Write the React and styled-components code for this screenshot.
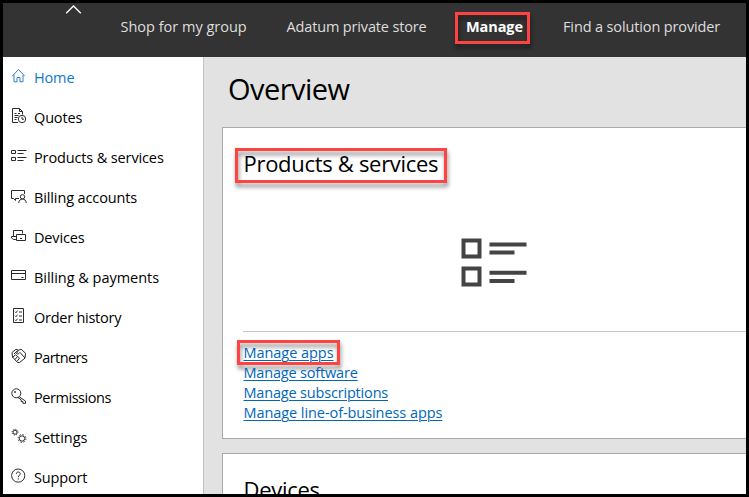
import React from "react";
import styled, { createGlobalStyle } from "styled-components";

const Global = createGlobalStyle`
  * { box-sizing: border-box; }
  body { margin: 0; background: #000; overflow: hidden; }
`;

const Frame = styled.div`
  width: 749px;
  height: 497px;
  border: 3px solid #000;
  overflow: hidden;
  display: flex;
  flex-direction: column;
  font: 400 14.5px/20px "Open Sans", "Noto Sans", sans-serif;
  color: #000;
`;

const TopBar = styled.header`
  position: relative;
  flex: none;
  height: 54px;
  background: #333;
  display: flex;
  align-items: flex-start;
  padding: 14px 0 0 117.5px;
  white-space: nowrap;
`;

const Collapse = styled.svg`
  position: absolute;
  left: 62px;
  top: 1px;
  width: 17px;
  height: 11px;
`;

const NavItem = styled.a`
  position: relative;
  flex: none;
  width: ${(p) => p.$width}px;
  color: ${(p) => (p.$active ? "#fff" : "#dedede")};
  font-weight: ${(p) => (p.$active ? 700 : 400)};
  letter-spacing: ${(p) => p.$track || 0}px;
`;

const Highlight = styled.span`
  position: absolute;
  left: ${(p) => p.$left}px;
  top: ${(p) => p.$top}px;
  width: ${(p) => p.$width}px;
  height: ${(p) => p.$height}px;
  border: 3px solid #ff4343;
  filter: drop-shadow(1px 4px 2px rgba(0, 0, 0, 0.45));
  pointer-events: none;
`;

const Body = styled.div`
  flex: 1;
  min-height: 0;
  display: flex;
`;

const Sidebar = styled.nav`
  flex: none;
  width: 201px;
  background: #fff;
  border-right: 1px solid #c2c2c2;
`;

const SideItem = styled.a`
  display: flex;
  align-items: center;
  height: 40px;
  padding: 2px 0 0 8px;
  gap: 7px;
  white-space: nowrap;
  color: ${(p) => (p.$active ? "#0f77d0" : "#000")};
  letter-spacing: ${(p) => p.$track || 0}px;
`;

const Icon = styled.svg`
  flex: none;
  width: 16px;
  height: 16px;
  margin-top: -4px;
  fill: none;
  stroke: ${(p) => (p.$active ? "#2f7fd0" : "#2b2b2b")};
  stroke-width: 1;
`;

const Main = styled.main`
  flex: 1;
  min-width: 0;
  background: #e2e2e2;
  padding-left: 18px;
  overflow: hidden;
`;

const PageTitle = styled.h1`
  margin: 0;
  height: 70px;
  padding: 12px 0 0 6px;
  font-size: 29px;
  line-height: 40px;
  font-weight: 400;
  letter-spacing: -0.55px;
`;

const Card = styled.section`
  height: 312px;
  margin-bottom: 14px;
  border: 1px solid #a9a9a9;
  border-right: 0;
  background: #fff;
  padding: 20px 0 0 20px;
`;

const CardTitle = styled.h2`
  position: relative;
  margin: 0;
  padding-left: 0.5px;
  font-size: 22px;
  line-height: 30px;
  font-weight: 400;
  letter-spacing: -0.3px;
`;

const Art = styled.div`
  display: flex;
  justify-content: center;
  height: 154px;
  padding: 60px 1px 0 0;
  border-bottom: 1px solid #c8c8c8;
`;

const Links = styled.div`
  display: flex;
  flex-direction: column;
  align-items: flex-start;
  padding: 11px 0 0 0.5px;
`;

const Link = styled.a`
  position: relative;
  color: #0067b8;
  text-decoration: underline;
  text-decoration-thickness: 1px;
  text-underline-offset: 2px;
  letter-spacing: ${(p) => p.$track || 0}px;
`;

const icons = {
  home: <path d="M1.200 8.200 7.500 1.500l6.300 6.700M3 6.800v7h3v-4.300h3v4.300h3v-7" />,
  quotes: (
    <>
      <path d="M7 14.500H1.500V.5h7l3 3v3M8.500.5v3h3M3.500 5.500h2M3.500 7.500h4M3.500 9.500h3M3.500 11.500h2M7 5.500h2" />
      <circle cx="11" cy="11" r="3.700" />
      <path d="M11 8.800v2.400h2" />
    </>
  ),
  products: (
    <path d="M.5 2.500h4v3h-4zM.5 9.500h4v3h-4zM6.500 2.500h9M6.500 5.500h6M6.500 9.500h9M6.500 12.500h6" />
  ),
  accounts: (
    <>
      <path d="M8 10.500H4.500v2l-2-2H.5v-8h13V6" />
      <circle cx="11.500" cy="8.800" r="2.200" />
      <path d="M7.700 15c.3-2.600 1.700-4 3.800-4s3.500 1.400 3.800 4" />
    </>
  ),
  devices: (
    <path d="M2.500 8.500v-6h9v3M5.500 11.500H2.500l-2-1.500V8.500h5M5.500 6.500h9v6h-9zM9 10.500h2" />
  ),
  card: <path d="M.5 2.500h14v9H.5zM.5 5.500h14M10.500 9.500h2" />,
  orders: (
    <path d="M2.500.5h10v14h-10zM4 3.700l1 1 1.500-2M4 7.700l1 1 1.500-2M4 11.700l1 1 1.500-2M8 4h3M8 8h3M8 12h3" />
  ),
  partners: (
    <>
      <path d="M1 4.500 5 1.200l2.500 1L10 1.200l4.500 4-.5 5-5.500 4.300h-2L1.500 9z" />
      <path d="M3 6 6.500 2.700M1.500 9.500l3-2.700 2 1.700-2.500 3M6.500 8.500l2 1.500-2.500 3.500M7.500 2.200 5.500 5.500c1.300 1.200 2.700 0 3.500-1l5 5.500" />
    </>
  ),
  key: (
    <>
      <circle cx="5.300" cy="5.300" r="4.500" />
      <circle cx="4" cy="4" r=".6" />
      <path d="m8.300 8.800 6.200 4.300v2.200h-2.600v-1.700h-1.700v-1.800L7 9.500" />
    </>
  ),
  gears: (
    <>
      <circle cx="4" cy="4.200" r="2" />
      <circle cx="4" cy="4.200" r="2.900" strokeDasharray="1.100 1.180" />
      <circle cx="11" cy="10.500" r="2.700" />
      <circle cx="11" cy="10.500" r="3.900" strokeDasharray="1.500 1.560" />
    </>
  ),
  help: (
    <>
      <circle cx="7.200" cy="7.600" r="6.600" />
      <path d="M5.300 6c0-1.300.8-2 2-2s2 .8 2 1.800c0 1.400-2 1.500-2 3.400M7.300 10.300v1.200" />
    </>
  ),
};

const sideItems = [
  ["home", "Home", -0.15],
  ["quotes", "Quotes", -0.15],
  ["products", "Products & services", -0.13],
  ["accounts", "Billing accounts", -0.12],
  ["devices", "Devices", -0.15],
  ["card", "Billing & payments", -0.03],
  ["orders", "Order history", -0.25],
  ["partners", "Partners", -0.55],
  ["key", "Permissions", -0.45],
  ["gears", "Settings", -0.05],
  ["help", "Support", -0.15],
];

export default function App() {
  return (
    <>
      <Global />
      <Frame>
        <TopBar>
          <Collapse viewBox="0 0 17 11" fill="none" stroke="#fff" strokeWidth="1.300">
            <path d="M1.200 9.300 8.500 2l7.300 7.300" />
          </Collapse>
          <NavItem $width={166}>Shop for my group</NavItem>
          <NavItem $width={179.5} $track={-0.15}>Adatum private store</NavItem>
          <NavItem $width={97} $active $track={-0.1}>
            Manage
            <Highlight $left={-11} $top={-5} $width={75} $height={32} />
          </NavItem>
          <NavItem $width={170} $track={-0.13}>Find a solution provider</NavItem>
        </TopBar>
        <Body>
          <Sidebar>
            {sideItems.map(([icon, label, track], i) => (
              <SideItem key={label} $active={i === 0} $track={track}>
                <Icon viewBox="0 0 16 16" $active={i === 0}>{icons[icon]}</Icon>
                {label}
              </SideItem>
            ))}
          </Sidebar>
          <Main>
            <PageTitle>Overview</PageTitle>
            <Card>
              <CardTitle>
                Products &amp; services
                <Highlight $left={-8} $top={0} $width={212} $height={35} />
              </CardTitle>
              <Art>
                <svg width="66" height="50" viewBox="0 0 66 50">
                  <g fill="none" stroke="#444" strokeWidth="4">
                    <path d="M2.500 2.500h16v16h-16zM2.500 30.500h16v16h-16z" />
                  </g>
                  <path
                    fill="#444"
                    d="M28.500 4.500h37v4h-37zM28.500 12.500h25v4h-25zM28.500 32.700h37v4h-37zM28.500 41h25v4h-25z"
                  />
                </svg>
              </Art>
              <Links>
                <Link $track={-0.05}>
                  Manage apps
                  <Highlight $left={-6.5} $top={-3} $width={103} $height={25} />
                </Link>
                <Link $track={-0.18}>Manage software</Link>
                <Link $track={-0.18}>Manage subscriptions</Link>
                <Link $track={-0.07}>Manage line-of-business apps</Link>
              </Links>
            </Card>
            <Card>
              <CardTitle>Devices</CardTitle>
            </Card>
          </Main>
        </Body>
      </Frame>
    </>
  );
}
